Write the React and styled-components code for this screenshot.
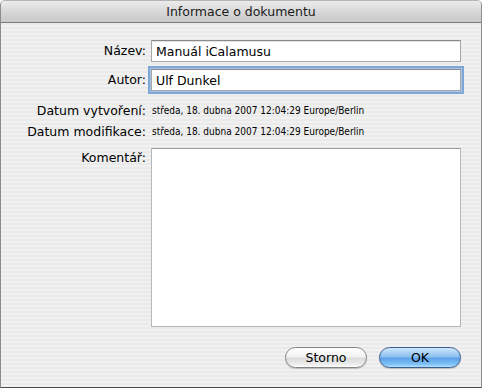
import styled, { createGlobalStyle } from 'styled-components';

const Global = createGlobalStyle`
  html, body { margin: 0; padding: 0; background: #fff; }
  body { font-family: "DejaVu Sans", "Liberation Sans", sans-serif; }
`;

const App = () => {
  return (
    <>
      <Global />
      <Window>
        <TitleBar>Informace o dokumentu</TitleBar>
        <Body>
          <Row>
            <Label>Název:</Label>
            <Field defaultValue="Manuál iCalamusu" />
          </Row>
          <Row $top={7}>
            <Label>Autor:</Label>
            <Field defaultValue="Ulf Dunkel" $focused />
          </Row>
          <Row $top={9} $height={21}>
            <Label>Datum vytvoření:</Label>
            <Value>středa, 18. dubna 2007 12:04:29 Europe/Berlin</Value>
          </Row>
          <Row $height={21}>
            <Label>Datum modifikace:</Label>
            <Value>středa, 18. dubna 2007 12:04:29 Europe/Berlin</Value>
          </Row>
          <Row $top={6} $height={179} $start>
            <Label $pad={2}>Komentář:</Label>
            <Comment />
          </Row>
          <Buttons>
            <Button>Storno</Button>
            <Button $primary>OK</Button>
          </Buttons>
        </Body>
      </Window>
    </>
  )
}

const Window = styled.div`
  width: 482px;
  height: 388px;
  box-sizing: border-box;
  display: flex;
  flex-direction: column;
  border-radius: 5px 5px 0 0;
  overflow: hidden;
  border: 1px solid #8c8c8c;
  border-bottom-color: #4a4a4a;
  border-top-color: #b4b4b4;
  background: repeating-linear-gradient(#f1f1f1 0 2px, #eaeaea 2px 4px);
`;

const TitleBar = styled.div`
  height: 21px;
  flex: none;
  display: flex;
  align-items: center;
  justify-content: center;
  font-size: 12.5px;
  color: #1a1a1a;
  border-bottom: 1px solid #7c7c7c;
  background: linear-gradient(#ececec, #d8d8d8 50%, #c9c9c9);
`;

const Body = styled.div`
  flex: 1;
  display: flex;
  flex-direction: column;
  padding-top: 17px;
`;

const Row = styled.div`
  display: grid;
  grid-template-columns: 145px 310px;
  column-gap: 5px;
  height: ${p => p.$height || 22}px;
  margin-top: ${p => p.$top || 0}px;
  align-items: ${p => p.$start ? 'start' : 'center'};
`;

const Label = styled.div`
  text-align: right;
  font-size: 12.5px;
  line-height: 16px;
  color: #000;
  white-space: nowrap;
  padding-top: ${p => p.$pad || 0}px;
`;

const Field = styled.input`
  box-sizing: border-box;
  height: 22px;
  width: 310px;
  margin: 0;
  padding: 0 4px;
  font-family: inherit;
  font-size: 12.5px;
  color: #000;
  background: #fff;
  border: 1px solid #a6a6a6;
  border-top-color: #8a8a8a;
  outline: none;
  box-shadow: ${p => p.$focused
    ? '0 0 0 1px #a9c5e6, 0 0 0 3px #7ea6d6'
    : 'inset 0 1px 0 #e2e2e2'};
`;

const Value = styled.div`
  font-family: "DejaVu Sans Condensed", "DejaVu Sans", sans-serif;
  font-size: 10px;
  color: #000;
  white-space: nowrap;
  padding-left: 1px;
`;

const Comment = styled.div`
  box-sizing: border-box;
  width: 310px;
  height: 179px;
  background: #fff;
  border: 1px solid #b7b7b7;
  border-top-color: #9a9a9a;
`;

const Buttons = styled.div`
  display: flex;
  justify-content: flex-end;
  gap: 12px;
  margin-top: 20px;
  padding-right: 20px;
`;

const Button = styled.button`
  width: 82px;
  height: 21px;
  border-radius: 11px;
  font-family: inherit;
  font-size: 12.5px;
  color: #000;
  padding: 0;
  border: 1px solid ${p => p.$primary ? '#3b5d91' : '#858585'};
  background: ${p => p.$primary
    ? 'linear-gradient(#cfe6fb 0%, #8cc1f2 45%, #5ea3e8 55%, #7dc0f6 85%, #b3e1fd 100%)'
    : 'linear-gradient(#ffffff 0%, #f2f2f2 45%, #dcdcdc 55%, #ececec 85%, #ffffff 100%)'};
  box-shadow: 0 1px 1px rgba(0, 0, 0, 0.2);
`;

export default App
